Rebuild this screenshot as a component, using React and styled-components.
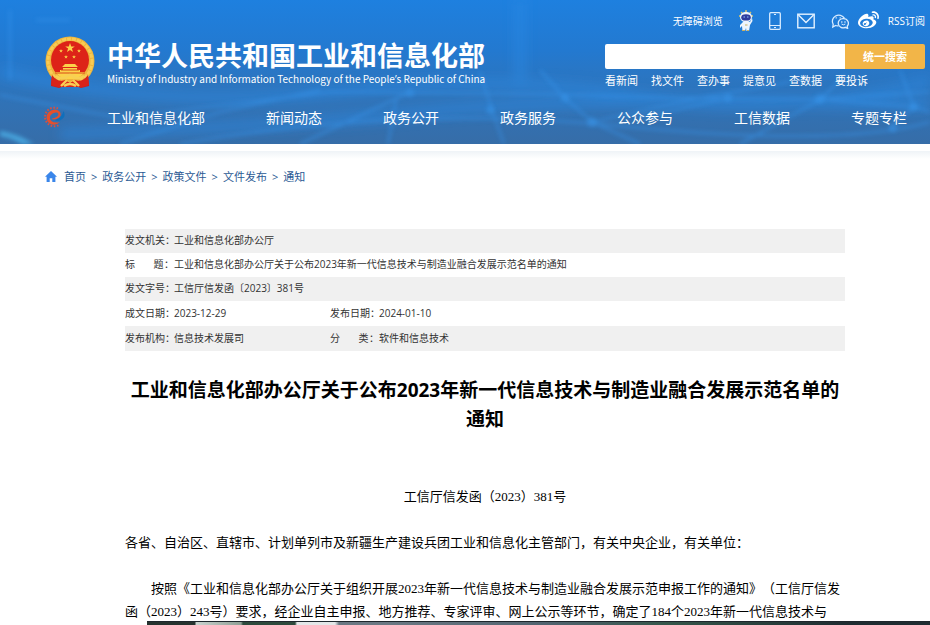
import React from 'react';
import styled, { createGlobalStyle } from 'styled-components';
import { FaWeibo } from 'react-icons/fa';

const navItems = ['工业和信息化部', '新闻动态', '政务公开', '政务服务', '公众参与', '工信数据', '专题专栏'];
const quickItems = ['看新闻', '找文件', '查办事', '提意见', '查数据', '要投诉'];
const crumbs = ['首页', '政务公开', '政策文件', '文件发布', '通知'];

const metaRows = [
    [['发文机关', '工业和信息化部办公厅']],
    [['标题', '工业和信息化部办公厅关于公布2023年新一代信息技术与制造业融合发展示范名单的通知']],
    [['发文字号', '工信厅信发函〔2023〕381号']],
    [['成文日期', '2023-12-29'], ['发布日期', '2024-01-10']],
    [['发布机构', '信息技术发展司'], ['分类', '软件和信息技术']],
];

export default function App(){
    return (<React.Fragment>
        <GlobalStyle />
        <Header>
            <NetBackdrop />
            <HeaderTop>
                <Brand href="#">
                    <Emblem />
                    <BrandText>
                        <strong>中华人民共和国工业和信息化部</strong>
                        <span>Ministry of Industry and Information Technology of the People<b>’</b>s Republic of China</span>
                    </BrandText>
                </Brand>
                <HeaderTools>
                    <ToolRow>
                        <a href="#">无障碍浏览</a>
                        <a href="#" aria-label="智能问答"><Mascot /></a>
                        <a href="#" aria-label="手机版"><PhoneIcon /></a>
                        <a href="#" aria-label="邮箱"><MailIcon /></a>
                        <SocialGroup>
                            <a href="#" aria-label="微信"><WechatIcon /></a>
                            <a href="#" aria-label="微博"><FaWeibo size={21} /></a>
                            <a href="#">RSS订阅</a>
                        </SocialGroup>
                    </ToolRow>
                    <SearchForm onSubmit={(e) => e.preventDefault()}>
                        <input type="text" aria-label="统一搜索" />
                        <button type="submit">统一搜索</button>
                    </SearchForm>
                    <QuickLinks>
                        {quickItems.map((item) => <a href="#" key={item}>{item}</a>)}
                    </QuickLinks>
                </HeaderTools>
            </HeaderTop>
            <NavBar>
                <a href="#" aria-label="首页"><GearLogo /></a>
                <NavLinks>
                    {navItems.map((item) => <a href="#" key={item}>{item}</a>)}
                </NavLinks>
            </NavBar>
        </Header>
        <HeaderShade />
        <Breadcrumb aria-label="当前位置">
            <HomeIcon />
            {crumbs.map((item, index) => (<React.Fragment key={item}>
                {index > 0 && <span>&gt;</span>}
                <a href="#">{item}</a>
            </React.Fragment>))}
        </Breadcrumb>
        <Article>
            <MetaTable>
                <colgroup>
                    <LabelCol /><ValueCol /><LabelCol /><col />
                </colgroup>
                <tbody>
                    {metaRows.map((cells, index) => (
                        <MetaRow key={index} $shaded={index % 2 === 0} $split={cells.length > 1}>
                            {cells.map(([label, value]) => (<React.Fragment key={label}>
                                <th scope="row">
                                    <MetaLabel>
                                        {label.length === 2 ? label.split('').map((c) => <span key={c}>{c}</span>) : <span>{label}</span>}
                                        <i>：</i>
                                    </MetaLabel>
                                </th>
                                <td colSpan={cells.length > 1 ? 1 : 3}>{value}</td>
                            </React.Fragment>))}
                        </MetaRow>
                    ))}
                </tbody>
            </MetaTable>
            <Title>工业和信息化部办公厅关于公布2023年新一代信息技术与制造业融合发展示范名单的通知</Title>
            <Content>
                <DocNumber>工信厅信发函（2023）381号</DocNumber>
                <p>各省、自治区、直辖市、计划单列市及新疆生产建设兵团工业和信息化主管部门，有关中央企业，有关单位：</p>
                <Indented>按照《工业和信息化部办公厅关于组织开展2023年新一代信息技术与制造业融合发展示范申报工作的通知》（工信厅信发函（2023）243号）要求，经企业自主申报、地方推荐、专家评审、网上公示等环节，确定了184个2023年新一代信息技术与</Indented>
            </Content>
        </Article>
        <DockEdge />
    </React.Fragment>);
}

// faint network of light behind the header
function NetBackdrop(){
    return (<Backdrop viewBox="0 0 930 144" preserveAspectRatio="none" aria-hidden="true">
        <defs>
            <filter id="soft" x="-20%" y="-20%" width="140%" height="140%"><feGaussianBlur stdDeviation="2" /></filter>
            <filter id="wide" filterUnits="userSpaceOnUse" x="0" y="0" width="930" height="144"><feGaussianBlur stdDeviation="6" /></filter>
        </defs>
        <g fill="none" stroke="#2b8be6" strokeWidth="11" opacity="0.5" filter="url(#wide)">
            <path d="M0 72 Q160 110 330 92 T640 96 T930 82" />
            <path d="M60 134 Q260 128 420 112 T930 104" />
            <path d="M520 0 V92" />
        </g>
        <g fill="none" stroke="#3795ec" strokeWidth="2" opacity="0.6" filter="url(#soft)">
            <path d="M0 95 L120 118 L330 92 L540 94 L680 98 L820 99 L930 92" />
            <path d="M10 10 V80 M36 20 H70" />
            <path d="M120 144 L220 112 L320 90 M300 144 L410 92 M388 144 L396 100" />
            <path d="M480 72 L492 110 L504 144 M540 70 L565 98 L592 122 L640 144" />
            <path d="M592 122 L700 98 L790 82 M728 98 L640 118 M740 144 L820 100 L846 74" />
            <path d="M900 70 L914 107 L930 112 M820 99 L914 107 L890 128" />
            <path d="M180 144 Q400 104 620 126 T930 122" />
        </g>
        <path d="M0 131 Q18 134 34 144 H22 Q10 137 0 136 Z" fill="#4db5ec" opacity="0.8" filter="url(#soft)" />
        <g fill="#3b9cf4" opacity="0.4" filter="url(#soft)">
            <circle cx="410" cy="93" r="4" /><circle cx="490" cy="110" r="4" /><circle cx="565" cy="98" r="4" />
            <circle cx="592" cy="122" r="5" /><circle cx="728" cy="98" r="4" /><circle cx="820" cy="99" r="5" />
            <circle cx="914" cy="107" r="4" /><circle cx="893" cy="128" r="4" />
        </g>
    </Backdrop>);
}

function Emblem(){
    const star = 'M0 -5 L1.2 -1.6 L4.8 -1.6 L1.9 0.6 L3 4 L0 1.9 L-3 4 L-1.9 0.6 L-4.8 -1.6 L-1.2 -1.6 Z';
    return (<svg width="50" height="52" viewBox="0 0 50 52" aria-hidden="true">
        <path d="M7 37 L43 37 L44 50 L36 52 L25 48 L14 52 L6 50 Z" fill="#cf1d1c" />
        <circle cx="25" cy="25" r="24.5" fill="#eeb43c" />
        <circle cx="25" cy="25" r="22" fill="none" stroke="#f8cb55" strokeWidth="3" strokeDasharray="4 1" />
        <circle cx="25" cy="24" r="19" fill="#dd2318" />
        <g fill="#fbd24a">
            <path d={star} transform="translate(25 12)" />
            <path d={star} transform="translate(16 15) scale(.4)" />
            <path d={star} transform="translate(34 15) scale(.4)" />
            <path d={star} transform="translate(21 21) scale(.4)" />
            <path d={star} transform="translate(29 21) scale(.4)" />
            <path d="M17 31 L20 28 H30 L33 31 Z M18 32 H32 V34 H35 V36 H40 Q36 41 31 43 H19 Q14 41 10 36 H15 V34 H18 Z" />
        </g>
        <path d="M10 37 H40 M16 34 H34" stroke="#d94b18" strokeWidth="1" />
        <path d="M7 39 Q13 47 20 44 L25 47 L30 44 Q37 47 43 39 L44 49 L37 51 L13 51 L6 49 Z" fill="#d9231a" />
        <path d="M11 40 Q17 44 21 41 Q25 37 29 41 Q33 44 39 40 M16 50 L22 44 M34 50 L28 44 M19 50 Q25 46 31 50" fill="none" stroke="#f7cf55" strokeWidth="2.4" />
    </svg>);
}

function GearLogo(){
    return (<svg width="22" height="22" viewBox="0 0 22 22" aria-hidden="true">
        <path d="M15 2.4 A9.3 9.3 0 1 0 16 19" fill="none" stroke="#d9503f" strokeWidth="2" strokeDasharray="1.6 1.6" />
        <path d="M17.5 7 Q16 3.5 11.5 3.5 Q3.5 4.5 3.5 12 Q4.5 18.8 11 18.8 Q14.5 18.6 17 16 Q11.5 17.5 8.3 15 Q6 12.5 7.6 9.2 Q10 6 14 6.6 Q15.6 7 15.4 9 Q13.8 12 9 12.4 L9.6 13.6 Q15.5 13.6 17.5 9.8 Z" fill="#e4502c" />
        <path d="M13.2 13.6 Q18.5 12 20.6 5 Q23.5 11.5 17.5 14.2 Q15 15 12 14.6 Z" fill="#0f6fbb" />
    </svg>);
}

function Mascot(){
    return (<svg width="14" height="22" viewBox="0 0 14 22" aria-hidden="true">
        <path d="M2 2 L4 4 M7 0 V3 M12 2 L10 4 M0 6 H2 M12 6 H14" stroke="#d8c56c" strokeWidth="1.4" />
        <ellipse cx="7" cy="7" rx="6" ry="5.2" fill="#eef5fd" />
        <ellipse cx="7" cy="7.4" rx="4.8" ry="3.2" fill="#303d9e" />
        <path d="M4.5 7 H6 M8 7 H9.5" stroke="#8cc5ff" />
        <path d="M4 12 L11 12 L13 8 L13.5 11 L11 15 L10 21 H7.5 L7 18 L6 21 H3.5 L3 16 L1 18 L1 15 Z" fill="#eef5fd" />
        <path d="M6 15 H8.5 M3 20.5 H6 M8 20.5 H10" stroke="#c7ae62" />
    </svg>);
}

function PhoneIcon(){
    return (<svg width="12" height="18" viewBox="0 0 12 18" fill="none" stroke="#d9ecff" aria-hidden="true">
        <rect x=".7" y=".7" width="10.6" height="16.6" rx="1" strokeWidth="1.3" />
        <path d="M1 13.5 H11 M5 2.5 H7 M5 15.5 H7" />
    </svg>);
}

function MailIcon(){
    return (<svg width="18" height="16" viewBox="0 0 18 16" fill="none" stroke="#e4f2ff" strokeWidth="1.4" aria-hidden="true">
        <rect x=".8" y="1.2" width="16.4" height="13.6" />
        <path d="M1.5 2 L9 9.5 L16.5 2" />
    </svg>);
}

function WechatIcon(){
    return (<svg width="18" height="16" viewBox="0 0 18 16" fill="none" stroke="#d9ecff" strokeWidth="1.3" aria-hidden="true">
        <path d="M7.5 12.8 Q6 13 4.6 12.5 L1.8 14 L2.2 11.4 A6.3 6 0 1 1 13.4 5.2" />
        <path d="M12.4 5.6 A4.8 4.6 0 1 0 14.2 14.3 L16.6 15.4 L16.2 13.2 A4.8 4.6 0 0 0 12.4 5.6 Z" />
        <path d="M4.6 4.8 H5.8 M8.6 4.8 H9.8 M10.2 9 H11.4 M13.4 9 H14.6" />
        <path d="M10.5 11 Q12.4 12.6 14.3 11" strokeWidth="1" />
    </svg>);
}

function HomeIcon(){
    return (<svg width="12" height="11" viewBox="0 0 12 11" fill="#3a86ea" aria-hidden="true">
        <path d="M6 0 L12 5.7 H10.4 V11 H7.3 V7.2 H4.7 V11 H1.6 V5.7 H0 Z" />
    </svg>);
}

const GlobalStyle = createGlobalStyle`
            body{
                margin: 0;
                background: #fff;
                color: #333;
                font-family: "Open Sans", "Noto Sans CJK SC", sans-serif;
            }
            a{
                color: inherit;
                text-decoration: none;
            }
            svg{
                display: block;
            }
        `;

const Header = styled.header`
            position: relative;
            isolation: isolate;
            overflow: hidden;
            color: #fff;
            background: linear-gradient(#1e80df 0%, #2379d0 35%, #3073b8 68%, #366da8 100%);
        `;

const Backdrop = styled.svg`
            position: absolute;
            inset: 0;
            z-index: -1;
            width: 100%;
            height: 100%;
        `;

const HeaderTop = styled.div`
            display: flex;
            justify-content: space-between;
            height: 92px;
            padding: 0 5px 0 45px;
        `;

const Brand = styled.a`
            display: flex;
            gap: 12px;
            padding-top: 36px;
        `;

const BrandText = styled.span`
            display: flex;
            flex-direction: column;
            padding-top: 5px;
            white-space: nowrap;
            strong{
                font-family: "Liberation Sans", "Noto Sans CJK SC", sans-serif;
                font-size: 27px;
                line-height: 32px;
                font-weight: 700;
            }
            span{
                font-family: "Noto Sans CJK SC", sans-serif;
                font-size: 10px;
                line-height: 12px;
            }
            b{
                font-family: "Open Sans", sans-serif;
                font-weight: 400;
            }
        `;

const HeaderTools = styled.div`
            width: 320px;
        `;

const ToolRow = styled.div`
            display: flex;
            align-items: center;
            justify-content: flex-end;
            gap: 16px;
            height: 44px;
            box-sizing: border-box;
            padding-bottom: 3px;
            font-size: 10px;
            white-space: nowrap;
        `;

const SocialGroup = styled.div`
            display: flex;
            align-items: center;
            gap: 9px;
        `;

const SearchForm = styled.form`
            display: flex;
            height: 25px;
            input{
                flex: 1;
                min-width: 0;
                border: 0;
                padding: 0 8px;
                background: #fff;
                border-radius: 2px 0 0 2px;
            }
            button{
                width: 80px;
                border: 0;
                padding: 0 0 2px;
                color: #fff;
                background: #f2b548;
                border-radius: 0 2px 2px 0;
                font: 700 11px "Noto Sans CJK SC", sans-serif;
            }
        `;

const QuickLinks = styled.div`
            display: flex;
            gap: 13px;
            font-size: 11px;
            line-height: 24px;
        `;

const NavBar = styled.nav`
            display: flex;
            align-items: center;
            gap: 42px;
            height: 50px;
            padding: 0 0 2px 43px;
        `;

const NavLinks = styled.div`
            display: flex;
            gap: 61px;
            font-size: 14px;
            white-space: nowrap;
        `;

const HeaderShade = styled.div`
            height: 8px;
            margin-top: 7px;
            background: linear-gradient(#eff3f7, #fff);
        `;

const Breadcrumb = styled.nav`
            display: flex;
            align-items: center;
            gap: 5px;
            height: 34px;
            padding-left: 45px;
            color: #2b5a94;
            font-size: 11px;
            svg{
                margin-right: 2px;
            }
        `;

const Article = styled.main`
            padding: 36px 85px 0 125px;
        `;

const MetaTable = styled.table`
            width: 100%;
            table-layout: fixed;
            border-collapse: collapse;
            font-size: 10px;
            line-height: 16px;
        `;

const LabelCol = styled.col`
            width: 49px;
        `;

const ValueCol = styled.col`
            width: 156px;
        `;

const MetaRow = styled.tr`
            height: ${props => props.$split ? '25px' : '24px'};
            background: ${props => props.$shaded ? '#f0f0f0' : '#fff'};
            th, td{
                padding: 0 0 2px;
                font-weight: 400;
                text-align: left;
                white-space: nowrap;
            }
        `;

const MetaLabel = styled.span`
            display: flex;
            justify-content: space-between;
            i{
                width: 10px;
                font-style: normal;
            }
            span:first-child:nth-last-child(3){
                margin-right: 18px;
            }
        `;

const Title = styled.h1`
            margin: 25px 0 51px;
            color: #000;
            font-size: 19px;
            line-height: 29px;
            text-align: center;
        `;

const Content = styled.div`
            color: #000;
            font-family: "Liberation Serif", "Noto Sans CJK SC", serif;
            font-size: 13px;
            line-height: 23px;
            text-spacing-trim: space-all;
            p{
                margin: 0 0 23px;
            }
            p:last-child{
                margin-bottom: 0;
            }
        `;

const DocNumber = styled.p`
            text-align: center;
        `;

const Indented = styled.p`
            text-indent: 2em;
        `;

// top edge of the desktop dock, lies over the page
const DockEdge = styled.div`
            position: fixed;
            left: 147px;
            right: 0;
            bottom: 0;
            height: 3px;
            border-top: 1px solid #1d262c;
            background: linear-gradient(90deg, #26332f 0 48px, #c9d3cf 49px, #8fa096 94px, #2d4a3c 96px 148px, #e3e7e8 150px 188px, #6a7883 192px 240px, #51636f 400px, #35564a 520px, #1f2c31 700px);
        `;
